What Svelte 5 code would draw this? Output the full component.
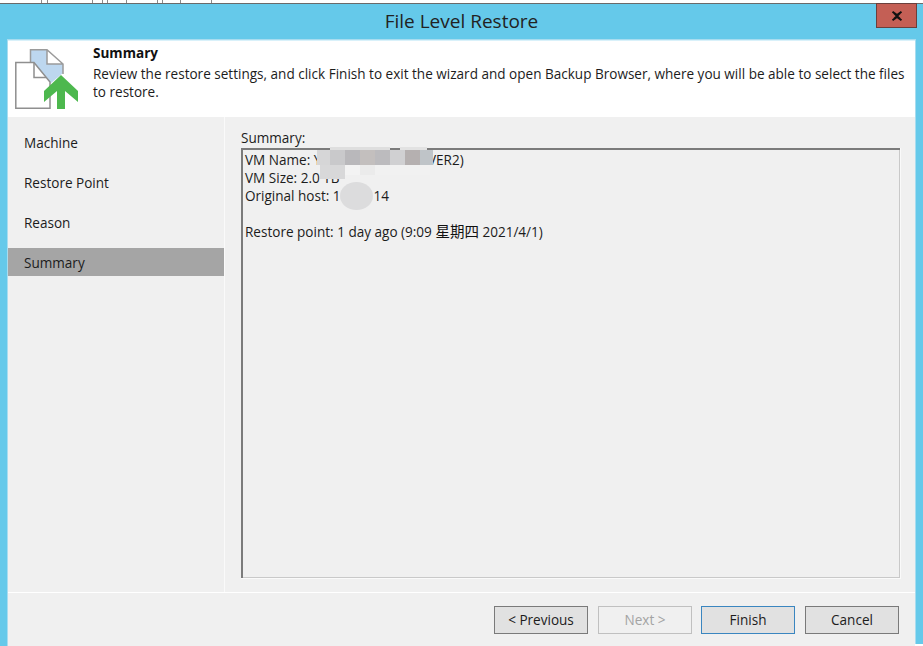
<script>
    const steps = ['Machine', 'Restore Point', 'Reason', 'Summary'];
    let active = 'Summary';

    // mosaic patches covering the redacted values (x, y, w, h, colour)
    const mosaic = [
        [330, 147, 60, 4, '#dedede'], [400, 147, 27, 4, '#e2e2e2'],
        [317, 150, 13, 15, '#d6d6d7'], [330, 150, 15, 15, '#c9c9cb'], [345, 150, 15, 15, '#b9b8bb'],
        [360, 150, 15, 15, '#c3bfbe'], [375, 150, 15, 15, '#bcbbbe'], [390, 150, 15, 15, '#d0d0d2'],
        [405, 150, 15, 15, '#b5b0b0'], [420, 150, 13, 15, '#bfc4c8'],
        [320, 165, 25, 14, '#d8d8d9'], [345, 165, 15, 10, '#f3f3f3'], [360, 165, 15, 10, '#ebebeb'],
        [375, 165, 55, 10, '#f1f1f1']
    ];
</script>

<div class="screen">
    <div class="strip">
        <i style="left: 41px"></i><i style="left: 47px"></i><i style="left: 92px"></i>
        <i style="left: 102px"></i><i style="left: 107px"></i><i style="left: 126px"></i>
        <i style="left: 157px"></i><i style="left: 162px"></i><i style="left: 180px"></i><i style="left: 211px"></i>
    </div>
    <div class="window">
        <div class="titlebar">
            <span class="title">File Level Restore</span>
            <button class="close" aria-label="Close">
                <svg width="12" height="10" viewBox="0 0 12 10">
                    <path d="M1.500 .8 6 4 10.500 .8M1.500 9.200 6 6 10.500 9.200M3 2l6 6M9 2l-6 6" fill="none" stroke="#111" stroke-width="2"/>
                </svg>
            </button>
        </div>
        <div class="client">
            <header>
                <svg class="logo" width="66" height="66" viewBox="0 0 66 66">
                    <path d="M16 1H32V15H48V24L36 34 19 14 16 13Z" fill="#bdd7ef"/>
                    <path d="M32 1 48 15H32Z" fill="#fff"/>
                    <path d="M15.500 13V.8H32L48 15V25M32 1V15H48" fill="none" stroke="#9b9b9b" stroke-width="1.500"/>
                    <path d="M.8 13.500H19L35 33V59.200H.8Z" fill="#fff" stroke="#8f8f8f" stroke-width="1.500"/>
                    <path d="M19 14V28.500H31" fill="none" stroke="#8f8f8f" stroke-width="1.500"/>
                    <path d="M46 26 63 42V53L50 42V60H42V42L29 53V42Z" fill="#4db84e"/>
                </svg>
                <div class="intro">
                    <h1>Summary</h1>
                    <p>Review the restore settings, and click Finish to exit the wizard and open Backup Browser, where you will be able to select the files to restore.</p>
                </div>
            </header>
            <div class="body">
                <nav>
                    {#each steps as step}
                        <div class="step" class:active={step === active}>{step}</div>
                    {/each}
                </nav>
                <main>
                    <div class="label">Summary:</div>
                    <div class="box">
                        <div>VM Name: Y</div><div class="tail">VER2)</div>
                        <div>VM Size: 2.0 TB</div>
                        <div>Original host: 1<span class="gap"></span>14</div>
                        <div>&nbsp;</div>
                        <div>Restore point: 1 day ago (9:09 <span class="cjk">星期四</span> 2021/4/1)</div>
                    </div>
                </main>
            </div>
            <footer>
                <button>&lt; Previous</button>
                <button class="next" disabled>Next &gt;</button>
                <button class="primary">Finish</button>
                <button>Cancel</button>
            </footer>
        </div>
    </div>
    {#each mosaic as [x, y, w, h, c]}
        <span class="patch" style="left: {x}px; top: {y}px; width: {w}px; height: {h}px; background: {c}"></span>
    {/each}
    <span class="blob"></span>
    <span class="corner"></span>
</div>

<style>
    :global(body) {
        background: #fff;
    }
    .screen {
        position: relative;
        width: 923px;
        height: 646px;
        overflow: hidden;
        font-family: "Open Sans", "Noto Sans CJK SC", sans-serif;
        font-size: 13.550px;
        color: #1c1c1c;
    }
    .strip {
        position: relative;
        height: 3px;
        background: #fff;
        border-bottom: 1px solid #6a6a6a;
    }
    .strip i {
        position: absolute;
        top: 0;
        width: 1px;
        height: 3px;
        background: #8a8a8a;
    }
    .window {
        background: #65c9ea;
        height: 642px;
        display: flex;
        flex-direction: column;
        padding: 0 8px;
    }
    .titlebar {
        flex: none;
        height: 36px;
        position: relative;
        display: flex;
        align-items: center;
        justify-content: center;
    }
    .title {
        font-size: 19px;
        color: #222;
        padding-bottom: 3px;
    }
    .close {
        position: absolute;
        right: -2px;
        top: -1px;
        width: 41px;
        height: 25px;
        padding: 0;
        background: #c45f55;
        border: 1px solid #6b3f3c;
        display: flex;
        align-items: center;
        justify-content: center;
    }
    .client {
        flex: 1;
        display: flex;
        flex-direction: column;
        background: #f0f0f0;
        box-shadow: 0 0 0 1px #a8dcef;
    }
    header {
        height: 77px;
        background: #fff;
        display: flex;
        flex: none;
        border-top: 1px solid #d9f1fa;
        box-sizing: border-box;
    }
    .logo {
        flex: none;
        margin: 8px 0 0 7px;
    }
    .intro {
        padding: 3px 0 0 12px;
    }
    h1 {
        margin: 0 0 3px;
        font-size: 13.550px;
        font-weight: 700;
        line-height: 18px;
        color: #111;
    }
    p {
        margin: 0;
        line-height: 18px;
        color: #1c1c1c;
    }
    .body {
        flex: 1;
        display: flex;
        min-height: 0;
        border-bottom: 1px solid #fff;
    }
    nav {
        width: 216px;
        flex: none;
        padding-top: 11px;
        border-right: 1px solid #fafafa;
    }
    .step {
        height: 28px;
        margin-bottom: 12px;
        padding-left: 16px;
        line-height: 31px;
    }
    .step.active {
        background: #a5a5a5;
    }
    main {
        flex: 1;
        padding: 12px 14px 13px 16px;
        display: flex;
        flex-direction: column;
        min-width: 0;
    }
    .label {
        line-height: 19px;
    }
    .box {
        position: relative;
        flex: 1;
        border: 1px solid #fafafa;
        border-width: 0 1px 1px 0;
        box-shadow: inset 2px 2px 0 #7b7b7b, inset -1px -1px 0 #c9c9c9;
        padding: 3px 4px;
        line-height: 18px;
    }
    .tail {
        position: absolute;
        left: 187px;
        top: 3px;
    }
    .gap {
        display: inline-block;
        width: 33px;
    }
    .cjk {
        font-size: 14.500px;
        line-height: 1;
        color: #111;
    }
    footer {
        flex: none;
        height: 53px;
        display: flex;
        justify-content: flex-end;
        gap: 10px;
        padding: 13px 16px 0 0;
        box-sizing: border-box;
    }
    button {
        font: inherit;
        color: #1c1c1c;
        box-sizing: border-box;
        width: 94px;
        height: 28px;
        padding: 0;
        background: #e1e1e1;
        border: 1px solid #7a7a7a;
    }
    button:disabled {
        background: #f0f0f0;
        border-color: #c0c0c0;
        color: #a3a3a3;
    }
    .next {
        margin-right: -1px;
    }
    button.primary {
        border-color: #3a86c0;
    }
    .patch {
        position: absolute;
        filter: blur(0.4px);
    }
    .blob {
        position: absolute;
        left: 340px;
        top: 182px;
        width: 33px;
        height: 28px;
        background: #dcdcdd;
        border-radius: 50%;
    }
    .corner {
        position: absolute;
        right: 0;
        bottom: 0;
        width: 8px;
        height: 2px;
        background: #fff;
    }
</style>
